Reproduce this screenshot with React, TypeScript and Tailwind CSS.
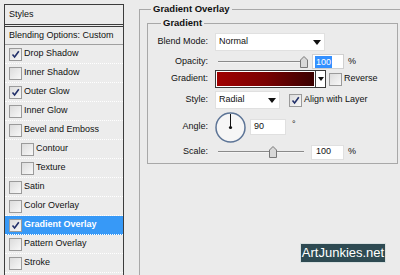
import React from "react"

type Item = { label: string; checked?: boolean; indent?: boolean; active?: boolean }

const items: Item[] = [
  { label: "Drop Shadow", checked: true },
  { label: "Inner Shadow" },
  { label: "Outer Glow", checked: true },
  { label: "Inner Glow" },
  { label: "Bevel and Emboss" },
  { label: "Contour", indent: true },
  { label: "Texture", indent: true },
  { label: "Satin" },
  { label: "Color Overlay" },
  { label: "Gradient Overlay", checked: true, active: true },
  { label: "Pattern Overlay" },
  { label: "Stroke" },
]

function Check({ checked }: { checked?: boolean }) {
  return (
    <span className="w-[13px] h-[13px] shrink-0 border border-[#9a9a9a] bg-gradient-to-br from-[#dcdcdc] to-[#f8f8f8] flex items-center justify-center">
      {checked && (
        <svg className="w-[9px] h-[9px]" viewBox="0 0 9 9" fill="none" stroke="#22306a" strokeWidth={1.6}>
          <path d="M1.5 4.5 L3.6 7 L7.8 1.2" />
        </svg>
      )}
    </span>
  )
}

function Arrow() {
  return (
    <svg className="w-[8px] h-[5px]" viewBox="0 0 8 5" fill="#111">
      <path d="M0 0 H8 L4 5 Z" />
    </svg>
  )
}

function Slider({ pos }: { pos: number }) {
  return (
    <div className="relative w-[86px] h-[14px] ml-[3px]">
      <div className="absolute left-0 right-0 top-[6px] h-[2px] border-t border-[#8a8a8a] bg-[#f4f4f4]" />
      <svg className="absolute top-[1px] w-[8px] h-[12px]" style={{ left: pos }} viewBox="0 0 8 12">
        <path d="M0.5 11.5 V4 L4 0.5 L7.5 4 V11.5 Z" fill="#d8d8d8" stroke="#777" />
      </svg>
    </div>
  )
}

function Label({ children }: { children: React.ReactNode }) {
  return <span className="w-[61px] shrink-0 text-right pr-[1px]">{children}</span>
}

export default function App() {
  return (
    <div className="relative w-[400px] h-[275px] overflow-hidden bg-[#ebebeb] flex font-['Liberation_Sans',Tahoma,sans-serif] text-[9px] text-[#111] whitespace-nowrap">
      <div className="ml-[4px] mt-[4px] w-[120px] h-[300px] shrink-0 border border-[#3c3c3c] bg-[#ececec] flex flex-col">
        <div className="h-[22px] pl-[4px] flex items-center border-b-[3px] border-double border-[#3c3c3c]">
          Styles
        </div>
        <div className="h-[18px] pl-[4px] flex items-center border-b border-[#a0a0a0]">
          Blending Options: Custom
        </div>
        {items.map((it) => (
          <div
            key={it.label}
            className={`h-[19px] flex items-center gap-[2px] border-b border-dotted border-white ${
              it.indent ? "pl-[16px]" : "pl-[4px]"
            } ${it.active ? "bg-[#3799f7] text-white font-bold" : ""}`}
          >
            <Check checked={it.checked} />
            <span>{it.label}</span>
          </div>
        ))}
      </div>

      <div className="w-[15px] shrink-0" />

      <fieldset className="w-[275px] h-[300px] shrink-0 border border-[#a8a8a8] mt-[3px]">
        <legend className="ml-[11px] px-[2px] font-bold text-[9.5px] leading-[12px]">Gradient Overlay</legend>
        <fieldset className="ml-[7px] mt-[2px] w-[251px] h-[147px] border border-[#a8a8a8]">
          <legend className="ml-[13px] px-[2px] font-bold text-[9.5px] leading-[12px]">Gradient</legend>

          <div className="mt-[4px] h-[18px] flex items-center gap-[6px]">
            <Label>Blend Mode:</Label>
            <div className="w-[110px] h-[18px] bg-white border border-[#e0e0e0] flex items-center justify-between pl-[3px] pr-[3px]">
              <span>Normal</span>
              <Arrow />
            </div>
          </div>

          <div className="mt-[2px] h-[17px] flex items-center gap-[6px]">
            <Label>Opacity:</Label>
            <Slider pos={82} />
            <div className="ml-[2px] w-[32px] h-[15px] bg-white border border-[#d0d0d0] flex items-center pl-[2px]">
              <span className="bg-[#3390ff] text-white leading-[12px] px-[1px]">100</span>
            </div>
            <span className="-ml-[2px]">%</span>
          </div>

          <div className="mt-[0px] h-[18px] flex items-center gap-[6px]">
            <Label>Gradient:</Label>
            <div className="w-[111px] h-[18px] border border-[#3a3a3a] flex">
              <div className="flex-1 border border-white bg-gradient-to-r from-[#a00000] via-[#7a0000] to-[#3a0000]" />
              <div className="w-[10px] bg-white border-l border-[#3a3a3a] flex items-center justify-center">
                <svg className="w-[6px] h-[4px]" viewBox="0 0 6 4" fill="#111">
                  <path d="M0 0 H6 L3 4 Z" />
                </svg>
              </div>
            </div>
            <div className="ml-[-3px] flex items-center gap-[2px]">
              <Check />
              <span>Reverse</span>
            </div>
          </div>

          <div className="mt-[3px] h-[18px] flex items-center gap-[6px]">
            <Label>Style:</Label>
            <div className="w-[65px] h-[18px] bg-white border border-[#e0e0e0] flex items-center justify-between pl-[3px] pr-[3px]">
              <span>Radial</span>
              <Arrow />
            </div>
            <div className="ml-[3px] flex items-center gap-[2px]">
              <Check checked />
              <span>Align with Layer</span>
            </div>
          </div>

          <div className="mt-[2px] h-[32px] flex items-center gap-[6px]">
            <Label>Angle:</Label>
            <svg className="w-[31px] h-[31px]" viewBox="0 0 31 31">
              <circle cx="15.5" cy="15.5" r="14.5" fill="#f6f6f6" stroke="#5c7496" strokeWidth="1.5" />
              <line x1="15.5" y1="15.5" x2="15.5" y2="2" stroke="#111" strokeWidth="1" />
              <circle cx="15.5" cy="15.5" r="1.6" fill="#111" />
            </svg>
            <div className="-ml-[2px] w-[36px] h-[16px] bg-white border border-[#e0e0e0] flex items-center pl-[3px]">
              90
            </div>
            <span className="self-start mt-[7px]">°</span>
          </div>

          <div className="mt-[1px] h-[16px] flex items-center gap-[6px]">
            <Label>Scale:</Label>
            <Slider pos={51} />
            <div className="ml-[1px] w-[33px] h-[15px] bg-white border border-[#e0e0e0] flex items-center pl-[4px]">
              100
            </div>
            <span className="-ml-[2px]">%</span>
          </div>
        </fieldset>
      </fieldset>

      <div className="absolute left-[300px] top-[243px] w-[86px] h-[20px] bg-[#2e4a52] border border-[#d8e0e0] text-white text-[13px] font-['Liberation_Sans',Arial,sans-serif] flex items-center justify-center">
        ArtJunkies.net
      </div>
    </div>
  )
}
